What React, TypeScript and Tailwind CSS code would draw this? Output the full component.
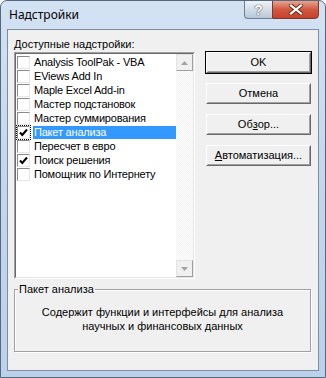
const addIns = [
  { name: "Analysis ToolPak - VBA", checked: false },
  { name: "EViews Add In", checked: false },
  { name: "Maple Excel Add-in", checked: false },
  { name: "Мастер подстановок", checked: false },
  { name: "Мастер суммирования", checked: false },
  { name: "Пакет анализа", checked: true, selected: true },
  { name: "Пересчет в евро", checked: false },
  { name: "Поиск решения", checked: true },
  { name: "Помощник по Интернету", checked: false },
];

function CheckBox({ checked, focused }: { checked: boolean; focused?: boolean }) {
  return (
    <span
      className={`w-[13px] h-[13px] shrink-0 bg-white border border-t-[#8a8a8a] border-l-[#8a8a8a] border-b-[#e6e6e6] border-r-[#e6e6e6] flex items-center justify-center ${
        focused ? "outline outline-1 outline-dotted outline-black" : ""
      }`}
    >
      {checked && (
        <svg width="11" height="11" viewBox="0 0 11 11">
          <path d="M2 5.5 L4.3 8 L9 2.5" fill="none" stroke="#000" strokeWidth="2" />
        </svg>
      )}
    </span>
  );
}

function Button({ children, isDefault }: { children: React.ReactNode; isDefault?: boolean }) {
  return (
    <button
      className={`h-[23px] w-full bg-[#f0f0f0] text-black flex items-center justify-center ${
        isDefault ? "border border-black" : "border border-transparent"
      }`}
    >
      <span className="w-full h-full flex items-center justify-center border border-t-white border-l-white border-b-[#696969] border-r-[#696969]">
        <span className="w-full h-full flex items-center justify-center border border-t-[#f0f0f0] border-l-[#f0f0f0] border-b-[#a0a0a0] border-r-[#a0a0a0]">
          {children}
        </span>
      </span>
    </button>
  );
}

export default function App() {
  return (
    <div className="w-[326px] h-[378px] bg-gradient-to-b from-[#d3e2f3] via-[#c3d6ec] to-[#bcd1ea] border border-[#55687e] rounded-t-[7px] flex flex-col font-['Liberation_Sans',sans-serif] text-[11px] text-black overflow-hidden">
      {/* title bar */}
      <div className="h-[28px] flex items-start justify-between shrink-0">
        <div className="pl-[8px] pt-[6px] text-[12px] font-['Noto_Sans',sans-serif] leading-[16px]">
          Надстройки
        </div>
        <div className="flex mr-[6px] -mt-[1px]">
          <div className="w-[28px] h-[19px] border border-[#6f7f92] border-r-0 rounded-bl-[4px] bg-gradient-to-b from-[#eef3f9] via-[#d3dde9] to-[#b8c7d8] flex items-center justify-center">
            <span className="text-white font-bold text-[14px] leading-none [text-shadow:0_0_1px_#333,0_0_1px_#333]">?</span>
          </div>
          <div className="w-[47px] h-[19px] border border-[#7a3a32] rounded-br-[4px] bg-gradient-to-b from-[#e8a390] via-[#d0583e] to-[#c8402a] flex items-center justify-center">
            <svg width="14" height="11" viewBox="0 0 14 11">
              <path d="M2 1.5 L12 9.5 M12 1.5 L2 9.5" stroke="#5a2a22" strokeWidth="4" strokeLinecap="square" />
              <path d="M2 1.5 L12 9.5 M12 1.5 L2 9.5" stroke="#fff" strokeWidth="2.2" strokeLinecap="square" />
            </svg>
          </div>
        </div>
      </div>

      {/* client area */}
      <div className="mx-[6px] mb-[6px] flex-1 border border-[#7d8ea3] bg-[#f0f0f0] flex flex-col px-[6px] pt-[7px]">
        <div className="flex gap-[10px]">
          <div className="w-[181px] flex flex-col">
            <div className="h-[15px] leading-[14px]">
              <span className="underline">Д</span>оступные надстройки:
            </div>
            <div className="h-[227px] border border-t-[#a0a0a0] border-l-[#a0a0a0] border-b-white border-r-white">
              <div className="h-full border border-t-[#696969] border-l-[#696969] border-b-[#e3e3e3] border-r-[#e3e3e3] bg-white flex">
                <div className="flex-1 flex flex-col pt-[1px] pl-[1px]">
                  {addIns.map((a) => (
                    <div key={a.name} className="h-[14px] flex items-center gap-[3px]">
                      <CheckBox checked={a.checked} focused={a.selected} />
                      <span
                        className={`h-[13px] leading-[13px] px-[1px] tracking-[-0.2px] ${
                          a.selected ? "bg-[#3399ff] text-white flex-1" : ""
                        }`}
                      >
                        {a.name}
                      </span>
                    </div>
                  ))}
                </div>
                <div className="w-[17px] flex flex-col bg-[repeating-conic-gradient(#f3f3f3_0_25%,#ffffff_0_50%)] bg-[length:2px_2px]">
                  <div className="h-[17px] bg-[#f0f0f0] border border-[#e3e3e3] border-b-[#a0a0a0] border-r-[#a0a0a0] flex items-center justify-center">
                    <svg width="7" height="4" viewBox="0 0 7 4">
                      <path d="M0 4 L3.5 0 L7 4 Z" fill="#a3a3a3" />
                    </svg>
                  </div>
                  <div className="flex-1" />
                  <div className="h-[17px] bg-[#f0f0f0] border border-[#e3e3e3] border-b-[#a0a0a0] border-r-[#a0a0a0] flex items-center justify-center">
                    <svg width="7" height="4" viewBox="0 0 7 4">
                      <path d="M0 0 L3.5 4 L7 0 Z" fill="#a3a3a3" />
                    </svg>
                  </div>
                </div>
              </div>
            </div>
          </div>

          <div className="w-[107px] flex flex-col gap-[8px] pt-[14px]">
            <Button isDefault>OK</Button>
            <Button>Отмена</Button>
            <Button>
              Об<span className="underline">з</span>ор...
            </Button>
            <Button>
              <span className="underline">А</span>втоматизация...
            </Button>
          </div>
        </div>

        {/* description group */}
        <fieldset className="mt-[4px] mr-[1px] h-[69px] border border-[#a0a0a0] shadow-[inset_1px_1px_0_#fff,1px_1px_0_#fff] px-[2px]">
          <legend className="px-[1px] ml-[1px] leading-[13px]">Пакет анализа</legend>
          <div className="text-center leading-[14px] pt-[9px]">
            Содержит функции и интерфейсы для анализа
            <br />
            научных и финансовых данных
          </div>
        </fieldset>
      </div>
    </div>
  );
}
